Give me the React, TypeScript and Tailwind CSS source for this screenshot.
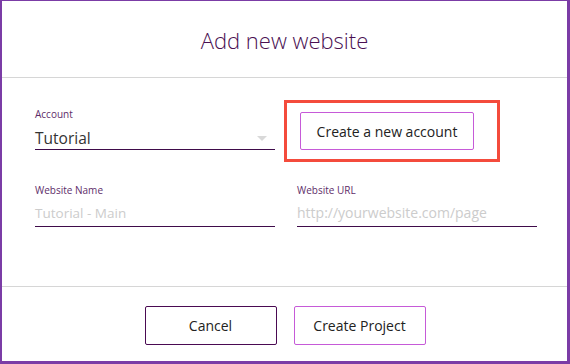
export default function App() {
  return (
    <div
      className="w-[570px] h-[364px] bg-white border-[#7b3ca6] border-l-2 border-t border-r-[3px] border-b-[3px] flex flex-col overflow-hidden"
      style={{ fontFamily: '"Open Sans", "Noto Sans", sans-serif' }}
    >
      {/* Header */}
      <div className="h-[77px] flex items-center justify-center border-b border-[#d6d6d6]">
        <h1 className="text-[22px] font-light text-[#4a1052] mt-[3px]">Add new website</h1>
      </div>

      {/* Body */}
      <div className="flex-1 pl-[33px] pt-[22px] border-b border-[#d6d6d6]">
        <div className="flex">
          <div className="w-[240px] mt-[8px]">
            <p className="text-[10px] leading-[12px] text-[#5e2d6a]">Account</p>
            <div className="relative flex items-center h-[24px] mt-[6px] border-b-[1.5px] border-[#3f0b4a]">
              <span className="text-[15.5px] leading-[20px] text-[#333]">Tutorial</span>
              <span className="absolute right-[8px] top-[10px] w-0 h-0 border-l-[5px] border-r-[5px] border-t-[5px] border-l-transparent border-r-transparent border-t-[#d9d9d9]" />
            </div>
          </div>
          <div className="ml-[9px] w-[216px] h-[62px] border-[3px] border-[#f44b3c] pl-[13px] pt-[9px]">
            <button className="w-[174px] h-[38px] border border-[#c65ad8] rounded-[2px] text-[14px] text-[#222] bg-white">
              Create a new account
            </button>
          </div>
        </div>

        <div className="flex gap-[22px] mt-[22px]">
          <div className="w-[240px]">
            <p className="text-[10px] leading-[12px] text-[#5e2d6a]">Website Name</p>
            <div className="h-[27px] mt-[4px] border-b-[1.5px] border-[#3f0b4a] flex items-center">
              <span className="text-[13.5px] leading-[18px] text-[#cccccc]">Tutorial - Main</span>
            </div>
          </div>
          <div className="w-[240px]">
            <p className="text-[10px] leading-[12px] text-[#5e2d6a]">Website URL</p>
            <div className="h-[27px] mt-[4px] border-b-[1.5px] border-[#3f0b4a] flex items-center">
              <span className="text-[14px] leading-[18px] text-[#cccccc]">http://yourwebsite.com/page</span>
            </div>
          </div>
        </div>
      </div>

      {/* Footer */}
      <div className="h-[74px] flex justify-center gap-[17px] pt-[19px] pl-[1px]">
        <button className="w-[132px] h-[39px] border border-[#4a0a52] rounded-[2px] text-[14px] text-[#222] bg-white">
          Cancel
        </button>
        <button className="w-[132px] h-[39px] border border-[#c65ad8] rounded-[2px] text-[14px] text-[#222] bg-white">
          Create Project
        </button>
      </div>
    </div>
  );
}
